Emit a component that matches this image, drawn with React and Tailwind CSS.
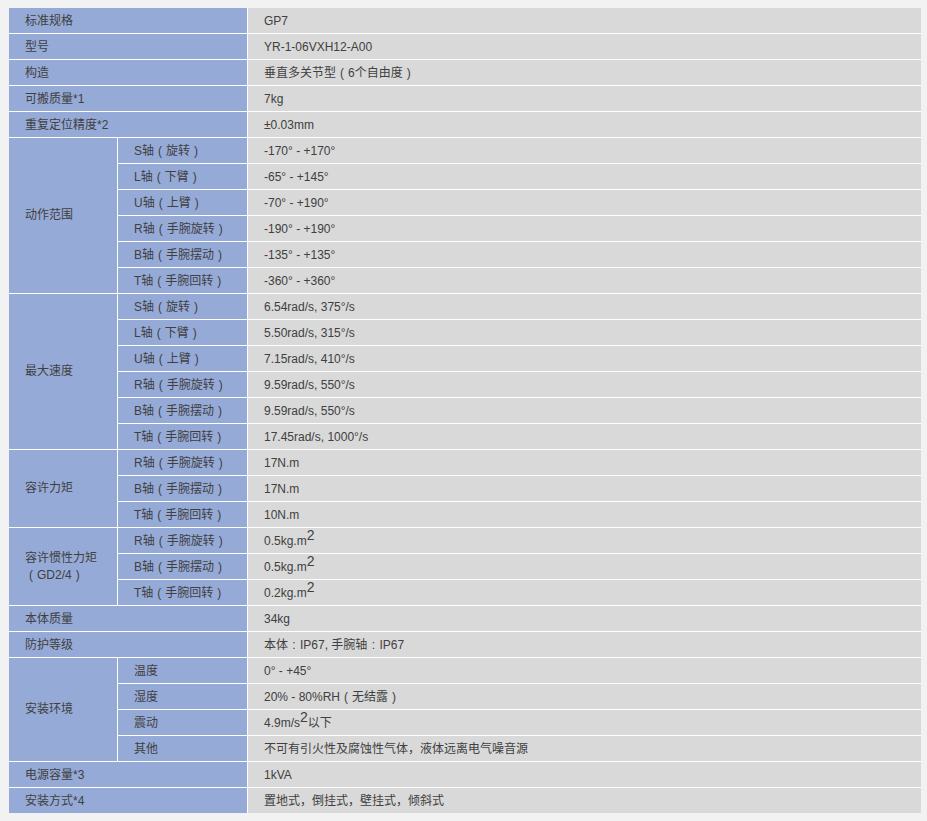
import React from "react";

const Sq = () => <sup className="relative -top-[5px] text-[14px] leading-none">2</sup>;

// full-width parens / colon are drawn centred in their box, as in the source page
const half = { "（": "(", "）": ")", "：": ":" };
const fmt = (s) =>
  typeof s !== "string"
    ? s
    : s.split(/([（）：])/).map((p, i) =>
        half[p] ? (
          <span key={i} className="inline-block w-[12px] text-center">
            {half[p]}
          </span>
        ) : (
          p
        )
      );

const simple = [
  ["标准规格", "GP7"],
  ["型号", "YR-1-06VXH12-A00"],
  ["构造", "垂直多关节型（6个自由度）"],
  ["可搬质量*1", "7kg"],
  ["重复定位精度*2", "±0.03mm"],
];

const groups = [
  {
    label: "动作范围",
    rows: [
      ["S轴（旋转）", "-170° - +170°"],
      ["L轴（下臂）", "-65° - +145°"],
      ["U轴（上臂）", "-70° - +190°"],
      ["R轴（手腕旋转）", "-190° - +190°"],
      ["B轴（手腕摆动）", "-135° - +135°"],
      ["T轴（手腕回转）", "-360° - +360°"],
    ],
  },
  {
    label: "最大速度",
    rows: [
      ["S轴（旋转）", "6.54rad/s, 375°/s"],
      ["L轴（下臂）", "5.50rad/s, 315°/s"],
      ["U轴（上臂）", "7.15rad/s, 410°/s"],
      ["R轴（手腕旋转）", "9.59rad/s, 550°/s"],
      ["B轴（手腕摆动）", "9.59rad/s, 550°/s"],
      ["T轴（手腕回转）", "17.45rad/s, 1000°/s"],
    ],
  },
  {
    label: "容许力矩",
    rows: [
      ["R轴（手腕旋转）", "17N.m"],
      ["B轴（手腕摆动）", "17N.m"],
      ["T轴（手腕回转）", "10N.m"],
    ],
  },
  {
    label: (
      <>
        容许惯性力矩
        <br />
        {fmt("（GD2/4）")}
      </>
    ),
    rows: [
      ["R轴（手腕旋转）", <>0.5kg.m<Sq /></>],
      ["B轴（手腕摆动）", <>0.5kg.m<Sq /></>],
      ["T轴（手腕回转）", <>0.2kg.m<Sq /></>],
    ],
  },
];

const middle = [
  ["本体质量", "34kg"],
  ["防护等级", "本体：IP67, 手腕轴：IP67"],
];

const env = {
  label: "安装环境",
  rows: [
    ["温度", "0° - +45°"],
    ["湿度", "20% - 80%RH（无结露）"],
    ["震动", <>4.9m/s<Sq />以下</>],
    ["其他", "不可有引火性及腐蚀性气体，液体远离电气噪音源"],
  ],
};

const tail = [
  ["电源容量*3", "1kVA"],
  ["安装方式*4", "置地式，倒挂式，壁挂式，倾斜式"],
];

const span = {
  3: "row-span-3",
  4: "row-span-4",
  6: "row-span-6",
};

const Label = ({ className = "", children }) => (
  <div className={`flex items-center bg-[#96aad7] pl-4 ${className}`}>{children}</div>
);
const Value = ({ children }) => (
  <div className="flex items-center bg-[#d9d9d9] pl-4">
    <span>{fmt(children)}</span>
  </div>
);

const SimpleRow = ([k, v]) => (
  <React.Fragment key={k}>
    <Label className="col-span-2">{k}</Label>
    <Value>{v}</Value>
  </React.Fragment>
);

const Group = (g, i) => (
  <React.Fragment key={i}>
    <Label className={`${span[g.rows.length]} leading-[17px]`}>
      <span>{g.label}</span>
    </Label>
    {g.rows.map(([k, v], j) => (
      <React.Fragment key={j}>
        <Label>
          <span>{fmt(k)}</span>
        </Label>
        <Value>{v}</Value>
      </React.Fragment>
    ))}
  </React.Fragment>
);

export default function App() {
  return (
    <div className="min-h-screen bg-[#f2f2f2] pl-[9px] pt-2 pb-2">
      <div
        className="grid w-[912px] grid-cols-[108px_129px_673px] auto-rows-[25px] gap-px bg-white text-[12px] text-[#404040]"
        style={{ fontFamily: '"Liberation Sans", "Noto Sans CJK SC", sans-serif' }}
      >
        {simple.map(SimpleRow)}
        {groups.map(Group)}
        {middle.map(SimpleRow)}
        {Group(env, "env")}
        {tail.map(SimpleRow)}
      </div>
    </div>
  );
}
